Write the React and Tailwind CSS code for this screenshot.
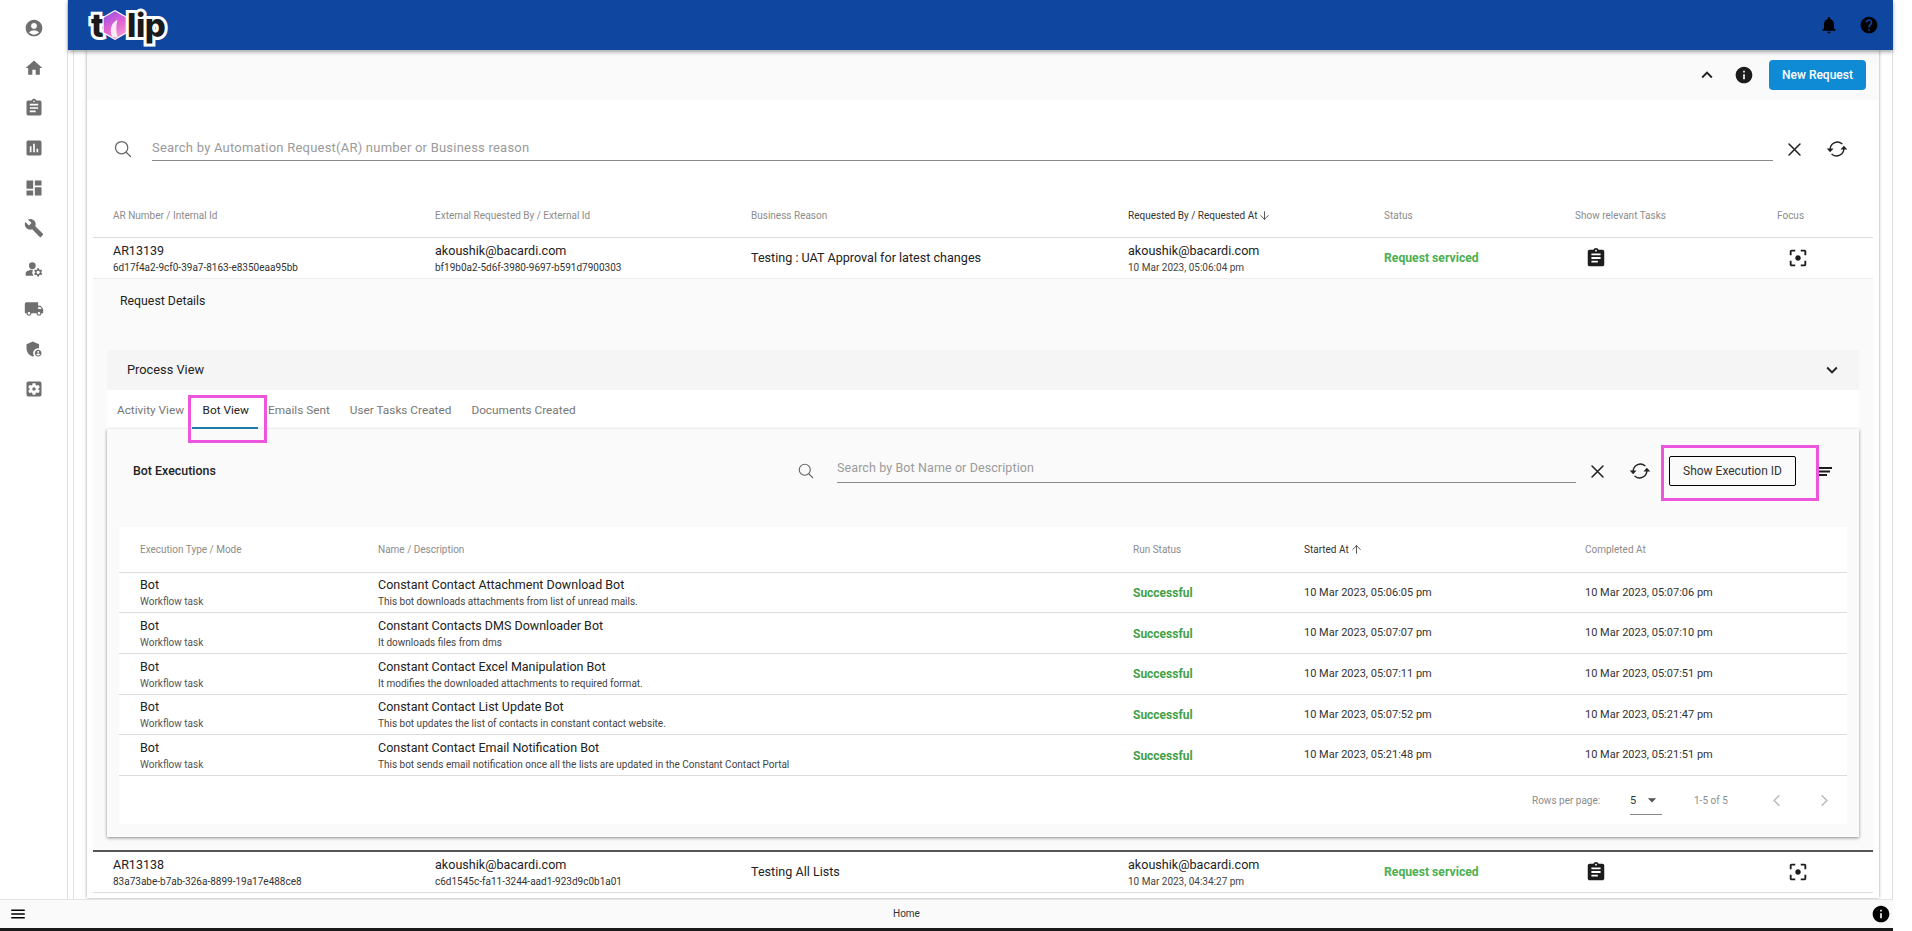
import React from "react";
import {
  MdAccountCircle, MdHome, MdAssignment, MdAssessment, MdDashboard, MdBuild, MdManageAccounts, MdLocalShipping,
  MdAdminPanelSettings, MdSettingsApplications, MdNotifications, MdHelp, MdInfo, MdKeyboardArrowUp, MdKeyboardArrowDown,
  MdFilterCenterFocus, MdMenu, MdArrowDropDown,
} from "react-icons/md";
import { IoSearchOutline, IoCloseOutline, IoChevronBackOutline, IoChevronForwardOutline } from "react-icons/io5";
import { ArrowDown, ArrowUp } from "lucide-react";

const sideIcons = [MdAccountCircle, MdHome, MdAssignment, MdAssessment, MdDashboard, MdBuild, MdManageAccounts, MdLocalShipping, MdAdminPanelSettings, MdSettingsApplications];

const bots = [
  ["Constant Contact Attachment Download Bot", "This bot downloads attachments from list of unread mails.", "10 Mar 2023, 05:06:05 pm", "10 Mar 2023, 05:07:06 pm"],
  ["Constant Contacts DMS Downloader Bot", "It downloads files from dms", "10 Mar 2023, 05:07:07 pm", "10 Mar 2023, 05:07:10 pm"],
  ["Constant Contact Excel Manipulation Bot", "It modifies the downloaded attachments to required format.", "10 Mar 2023, 05:07:11 pm", "10 Mar 2023, 05:07:51 pm"],
  ["Constant Contact List Update Bot", "This bot updates the list of contacts in constant contact website.", "10 Mar 2023, 05:07:52 pm", "10 Mar 2023, 05:21:47 pm"],
  ["Constant Contact Email Notification Bot", "This bot sends email notification once all the lists are updated in the Constant Contact Portal", "10 Mar 2023, 05:21:48 pm", "10 Mar 2023, 05:21:51 pm"],
];

const reqCols = "grid grid-cols-[322px_316px_377px_256px_191px_202px_1fr] pl-[20px]";
const botCols = "grid grid-cols-[238px_755px_171px_281px_1fr] pl-[21px]";

function SyncIcon({ className }) {
  return (
    <svg width="22" height="22" viewBox="0 0 24 24" fill="none" stroke="currentColor" strokeWidth="1.5" strokeLinecap="round" className={`shrink-0 ${className}`}>
      <path d="M4.5 12.5 A8 8 0 0 1 17.5 6.2" />
      <path d="M19.5 11.5 A8 8 0 0 1 6.5 17.8" />
      <path d="M0.8 11.5 H8.2 L4.5 15.6 Z" fill="currentColor" stroke="none" />
      <path d="M15.8 12.5 H23.2 L19.5 8.4 Z" fill="currentColor" stroke="none" />
    </svg>
  );
}

function SortIcon({ className }) {
  return (
    <svg width="13" height="9" viewBox="0 0 13 9" fill="currentColor" className={className}>
      <rect x="0" y="0" width="13" height="2" />
      <rect x="0" y="3.5" width="11" height="2" />
      <rect x="0" y="7" width="8" height="2" />
    </svg>
  );
}

function Logo() {
  return (
    <div className="flex items-center h-[50px] ml-[23px] font-['Inter',sans-serif] font-extrabold text-[33px] leading-none text-[#1a1a1a] [-webkit-text-stroke:6px_white] [paint-order:stroke_fill] tracking-[-0.5px]">
      <span>t</span>
      <svg width="26" height="30" viewBox="0 0 30 34" className="mx-[-1px] shrink-0">
        <defs>
          <linearGradient id="hex" x1="0.2" y1="0" x2="0.7" y2="1">
            <stop offset="0" stopColor="#9b4fe6" />
            <stop offset="0.55" stopColor="#e265d0" />
            <stop offset="1" stopColor="#f29ccf" />
          </linearGradient>
        </defs>
        <path d="M15 1 L28 8.5 V25.5 L15 33 L2 25.5 V8.5 Z" fill="url(#hex)" stroke="white" strokeWidth="2.5" strokeLinejoin="round" />
        <path d="M12 31 C8 22 11 14 18 11 C16 18 16 24 18 31 Z" fill="#fff" opacity="0.85" />
      </svg>
      <span>lip</span>
    </div>
  );
}

function SearchBox({ placeholder, className }) {
  return <div className={`flex-1 border-b border-[#8a8a8a] text-[#9a9a9a] ${className}`}>{placeholder}</div>;
}

function ReqRow({ ar, id, ext, extId, reason, date }) {
  return (
    <div className={`${reqCols} h-[40px]`}>
      <div className="pt-[5px]">
        <div className="text-[12.5px] leading-[16px] text-[#222]">{ar}</div>
        <div className="text-[10px] leading-[14px] mt-[2px] text-[#333]">{id}</div>
      </div>
      <div className="pt-[5px]">
        <div className="text-[12.6px] leading-[16px] text-[#222]">{ext}</div>
        <div className="text-[10px] leading-[14px] mt-[2px] text-[#333]">{extId}</div>
      </div>
      <div className="flex items-center pt-[1px] text-[12.6px] text-[#222]">{reason}</div>
      <div className="pt-[5px]">
        <div className="text-[12.6px] leading-[16px] text-[#222]">{ext}</div>
        <div className="text-[10px] leading-[14px] mt-[2px] text-[#444]">{date}</div>
      </div>
      <div className="flex items-center pt-[1px] text-[12.2px] font-bold text-[#4caf50]">Request serviced</div>
      <div className="flex items-center pl-[10px]"><MdAssignment size={22} className="text-[#1c1c1c]" /></div>
      <div className="flex items-center pl-[10px]"><MdFilterCenterFocus size={22} className="text-[#1c1c1c]" /></div>
    </div>
  );
}

export default function App() {
  return (
    <div className="w-[1912px] h-[931px] flex flex-col overflow-hidden bg-white font-['Roboto',sans-serif]">
      <div className="flex flex-1 min-h-0">
        <aside className="w-[67px] shrink-0 flex flex-col items-center pt-[17.5px] gap-[20.2px]">
          {sideIcons.map((I, i) => <I key={i} size={20} className="text-[#6f6f6f]" />)}
        </aside>
        <main className="w-[1826px] flex flex-col min-h-0 border-l border-[#e0e0e0]">
          <header className="h-[50px] shrink-0 bg-[#0f47a0] flex items-center shadow-[0_2px_4px_rgba(0,0,0,0.35)] relative z-10">
            <Logo />
            <div className="ml-auto flex items-center gap-[20px] pr-[14px]">
              <MdNotifications size={20} className="text-black" />
              <MdHelp size={20} className="text-black" />
            </div>
          </header>
          <div className="flex-1 min-h-0 pl-[5px] border-r border-[#e0e0e0]">
            <div className="h-full border-l border-[#e0e0e0] pl-[13px]">
              <div className="w-[1792px] h-[848px] flex flex-col shadow-[0_0_3px_rgba(0,0,0,0.4)] bg-white overflow-hidden">
                <div className="h-[50px] shrink-0 bg-[#fafafa] flex items-center justify-end pr-[13px]">
                  <MdKeyboardArrowUp size={22} className="text-[#222] mr-[16px]" />
                  <MdInfo size={20} className="text-[#1c1c1c] mr-[15px]" />
                  <button className="w-[97px] h-[30px] rounded-[4px] bg-[#0f8bd6] text-white text-[12px] font-medium">New Request</button>
                </div>
                <div className="h-[87.5px] shrink-0 flex items-start pt-[36px] pl-[26px] pr-[31px]">
                  <IoSearchOutline size={20} className="text-[#666] mt-[3px] mr-[19px] shrink-0" />
                  <SearchBox placeholder="Search by Automation Request(AR) number or Business reason" className="h-[25px] pt-[2px] text-[13px] leading-[20px] tracking-[0.22px]" />
                  <IoCloseOutline size={25} className="text-[#222] ml-[9px] mt-[1px]" />
                  <SyncIcon className="text-[#222] ml-[19px] mt-[2px]" />
                </div>
                <div className="mx-[6px] flex-1 flex flex-col min-h-0">
                  <div className={`${reqCols} h-[50px] items-center border-b border-[#dcdcdc] text-[10px] text-[#8c8c8c] pt-[6px]`}>
                    <div>AR Number / Internal Id</div>
                    <div>External Requested By / External Id</div>
                    <div>Business Reason</div>
                    <div className="flex items-center text-[#333]">Requested By / Requested At<ArrowDown size={13} strokeWidth={1.5} className="ml-[1px]" /></div>
                    <div>Status</div>
                    <div>Show relevant Tasks</div>
                    <div>Focus</div>
                  </div>
                  <ReqRow ar="AR13139" id="6d17f4a2-9cf0-39a7-8163-e8350eaa95bb" ext="akoushik@bacardi.com" extId="bf19b0a2-5d6f-3980-9697-b591d7900303" reason="Testing : UAT Approval for latest changes" date="10 Mar 2023, 05:06:04 pm" />
                  <div className="h-[574px] shrink-0 bg-[#fafafa] border-t border-[#eeeeee] border-b-2 border-b-[#555] px-[14px] flex flex-col">
                    <div className="h-[71px] shrink-0 pt-[14px] pl-[13px] text-[12.3px] leading-[16px] text-[#222]">Request Details</div>
                    <div className="h-[40px] shrink-0 bg-[#f5f5f5] flex items-center justify-between pl-[20px] pr-[16px] text-[12.8px] text-[#222]">
                      <span className="pt-[1px]">Process View</span>
                      <MdKeyboardArrowDown size={22} className="text-[#222]" />
                    </div>
                    <div className="h-[39px] shrink-0 bg-white flex text-[11.8px] text-[#777]">
                      <div className="pl-[10px] pr-[7.5px] pt-[12px]">Activity View</div>
                      <div className="relative pl-[11px] pr-[9px] pt-[12px] text-[#222] border-b-2 border-[#1c7ea6]">
                        Bot View
                        <div className="absolute left-[-4px] right-[-9px] top-[5px] bottom-[-16px] border-[3px] border-[#ee55dd]" />
                      </div>
                      <div className="px-[10px] pt-[12px]">Emails Sent</div>
                      <div className="px-[10px] pt-[12px]">User Tasks Created</div>
                      <div className="px-[10px] pt-[12px]">Documents Created</div>
                    </div>
                    <div className="flex-1 min-h-0 mb-[13px] bg-[#fafafa] shadow-[0_1px_3px_rgba(0,0,0,0.45)] px-[12px] flex flex-col">
                      <div className="h-[98px] shrink-0 flex items-center pb-[14px]">
                        <div className="w-[686px] pl-[14px] pt-[2px] text-[12.4px] font-medium text-[#222]">Bot Executions</div>
                        <IoSearchOutline size={18} className="text-[#666] mr-[22px] shrink-0 ml-[-8px]" />
                        <SearchBox placeholder="Search by Bot Name or Description" className="h-[24px] text-[12.5px] leading-[18px] tracking-[0.1px]" />
                        <IoCloseOutline size={25} className="text-[#222] ml-[9px] mt-[1px]" />
                        <SyncIcon className="text-[#222] ml-[19px]" />
                        <div className="relative ml-[18px] mr-[51px]">
                          <button className="block w-[127px] h-[30px] rounded-[2px] border border-black text-[12px] text-[#333]">Show Execution ID</button>
                          <div className="absolute left-[-8px] right-[-23px] top-[-11px] bottom-[-15px] border-[3px] border-[#ee55dd]" />
                          <SortIcon className="absolute right-[-36px] top-[11px] text-[#1c1c1c]" />
                        </div>
                      </div>
                      <div className="h-[297px] shrink-0 bg-white">
                        <div className={`${botCols} h-[46px] items-center border-b border-[#dcdcdc] text-[10px] text-[#8c8c8c]`}>
                          <div>Execution Type / Mode</div>
                          <div>Name / Description</div>
                          <div>Run Status</div>
                          <div className="flex items-center text-[#333]">Started At<ArrowUp size={13} strokeWidth={1.5} className="ml-[1px]" /></div>
                          <div>Completed At</div>
                        </div>
                        {bots.map((b) => (
                          <div key={b[0]} className={`${botCols} h-[40.7px] border-b border-[#dcdcdc] items-center pt-[1px]`}>
                            <div>
                              <div className="text-[12.5px] leading-[15px] text-[#222]">Bot</div>
                              <div className="text-[10px] leading-[13px] mt-[3px] text-[#555]">Workflow task</div>
                            </div>
                            <div>
                              <div className="text-[12.5px] leading-[15px] text-[#222]">{b[0]}</div>
                              <div className="text-[10px] leading-[13px] mt-[3px] text-[#444]">{b[1]}</div>
                            </div>
                            <div className="text-[12px] font-bold text-[#43a047]">Successful</div>
                            <div className="text-[11px] text-[#333]">{b[2]}</div>
                            <div className="text-[11px] text-[#333]">{b[3]}</div>
                          </div>
                        ))}
                        <div className="flex items-center h-[46px] pt-[3px] text-[10px] text-[#8c8c8c]">
                          <div className="ml-[1413px] w-[98px]">Rows per page:</div>
                          <div className="relative w-[32px] h-[28px] flex items-center border-b border-[#888] text-[11px] text-[#333] mt-[2px]">
                            5
                            <MdArrowDropDown size={20} className="absolute left-[12px] top-[3px] text-[#555]" />
                          </div>
                          <div className="ml-[32px] w-[74px]">1-5 of 5</div>
                          <IoChevronBackOutline size={17} className="text-[#bbb]" />
                          <IoChevronForwardOutline size={17} className="text-[#bbb] ml-[31px]" />
                        </div>
                      </div>
                    </div>
                  </div>
                  <div className="border-b border-[#dcdcdc]">
                    <ReqRow ar="AR13138" id="83a73abe-b7ab-326a-8899-19a17e488ce8" ext="akoushik@bacardi.com" extId="c6d1545c-fa11-3244-aad1-923d9c0b1a01" reason="Testing All Lists" date="10 Mar 2023, 04:34:27 pm" />
                  </div>
                </div>
              </div>
            </div>
          </div>
        </main>
      </div>
      <footer className="h-[29px] shrink-0 bg-[#fafafa] border-t border-[#e4e4e4] w-[1893px] flex items-center justify-between pl-[9px] pr-[2px] relative">
        <MdMenu size={18} className="text-black" />
        <span className="absolute left-[893px] top-[6px] text-[10px] text-[#333]">Home</span>
        <MdInfo size={20} className="text-black" />
      </footer>
      <div className="h-[3px] shrink-0 w-[1893px] bg-[#1a1a1a]" />
    </div>
  );
}
